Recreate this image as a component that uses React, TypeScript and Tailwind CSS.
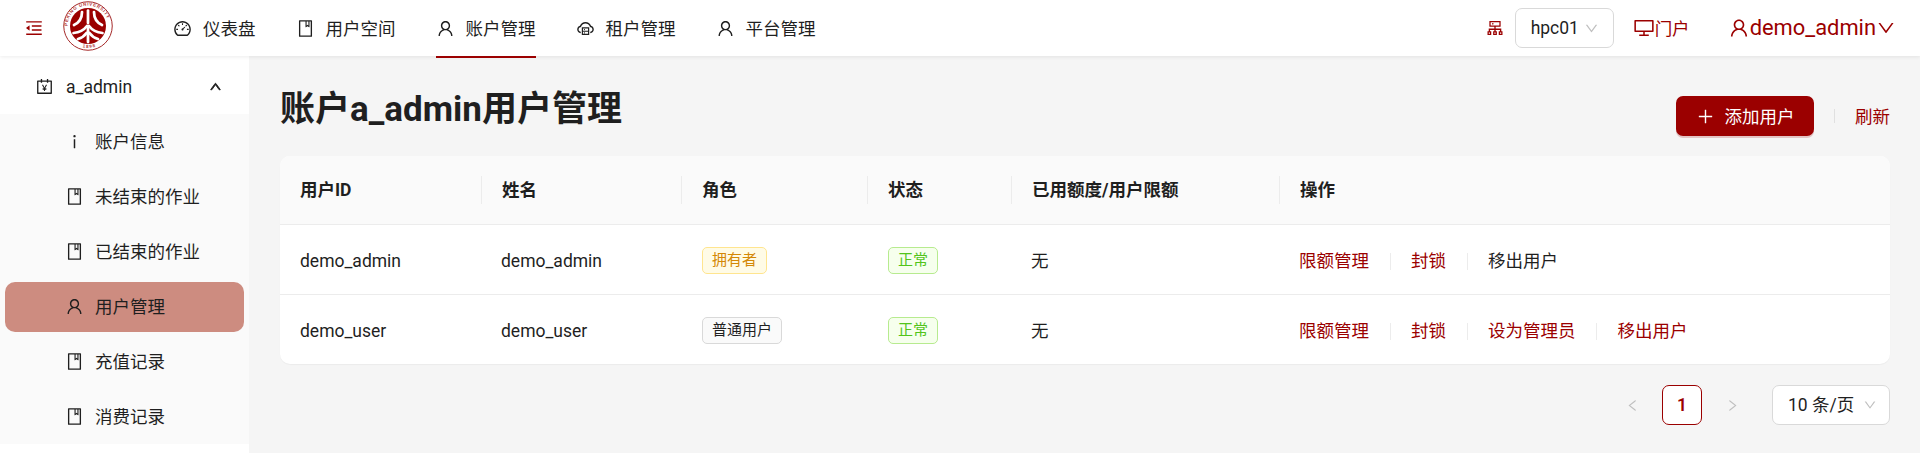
import React from "react";
import {
  AiOutlineAccountBook,
  AiOutlineBook,
  AiOutlineCloudServer,
  AiOutlineCluster,
  AiOutlineDashboard,
  AiOutlineDesktop,
  AiOutlineDown,
  AiOutlineInfo,
  AiOutlineLeft,
  AiOutlineMenuFold,
  AiOutlinePlus,
  AiOutlineRight,
  AiOutlineUp,
  AiOutlineUser,
} from "react-icons/ai";

const navItems = [
  { label: "仪表盘", icon: <AiOutlineDashboard size={19} /> },
  { label: "用户空间", icon: <AiOutlineBook size={19} /> },
  { label: "账户管理", icon: <AiOutlineUser size={19} />, active: true },
  { label: "租户管理", icon: <AiOutlineCloudServer size={19} /> },
  { label: "平台管理", icon: <AiOutlineUser size={19} /> },
];

const sideItems = [
  { label: "账户信息", icon: <AiOutlineInfo size={19} /> },
  { label: "未结束的作业", icon: <AiOutlineBook size={19} /> },
  { label: "已结束的作业", icon: <AiOutlineBook size={19} /> },
  { label: "用户管理", icon: <AiOutlineUser size={19} />, active: true },
  { label: "充值记录", icon: <AiOutlineBook size={19} /> },
  { label: "消费记录", icon: <AiOutlineBook size={19} /> },
];

const columns = [
  { label: "用户ID", width: "w-[201px]" },
  { label: "姓名", width: "w-[200px]" },
  { label: "角色", width: "w-[186px]" },
  { label: "状态", width: "w-[144px]" },
  { label: "已用额度/用户限额", width: "w-[268px]" },
  { label: "操作", width: "" },
];

const users = [
  { id: "demo_admin", owner: true, actions: ["限额管理", "封锁", "移出用户"] },
  { id: "demo_user", owner: false, actions: ["限额管理", "封锁", "设为管理员", "移出用户"] },
];

const Logo = () => (
  <svg viewBox="0 0 100 100" className="w-[50px] h-[50px]">
    <circle cx="50" cy="50" r="48.5" fill="#fff" stroke="#a52a2a" strokeWidth="2" />
    <circle cx="50" cy="50" r="36" fill="#9b0000" />
    <defs>
      <path id="ringTop" d="M 9 50 A 41 41 0 0 1 91 50" />
      <path id="ringBottom" d="M 6 50 A 44 44 0 0 0 94 50" />
    </defs>
    <text fontSize="9" fontWeight="700" fill="#b33a3a" fontFamily="Liberation Sans, sans-serif" letterSpacing="1.4">
      <textPath href="#ringTop">PEKING UNIVERSITY</textPath>
    </text>
    <text fontSize="9" fontWeight="700" fill="#b33a3a" fontFamily="Liberation Sans, sans-serif" letterSpacing="2">
      <textPath href="#ringBottom" startOffset="42%">1898</textPath>
    </text>
    <g fill="none" stroke="#fff" strokeWidth="5.5" strokeLinecap="round">
      <path d="M50 19 V44" />
      <path d="M38 22 C38 34 33 43 22 48" />
      <path d="M62 22 C62 34 67 43 78 48" />
      <path d="M50 50 V82" />
      <path d="M48 50 C42 58 32 63 21 64" />
      <path d="M52 50 C58 58 68 63 79 64" />
      <path d="M47 64 C43 70 37 74 30 76" />
      <path d="M53 64 C57 70 63 74 70 76" />
    </g>
  </svg>
);

const Tag = ({ tone, children }: { tone: "gold" | "green" | "gray"; children: React.ReactNode }) => {
  const tones = {
    gold: "bg-[#fffbe6] border-[#ffe58f] text-[#d48806]",
    green: "bg-[#f6ffed] border-[#b7eb8f] text-[#52c41a]",
    gray: "bg-[#fafafa] border-[#d9d9d9] text-[#1f1f1f]",
  };
  return (
    <span className={`ml-px inline-flex items-center h-[27px] px-[9px] rounded-[5px] border text-[15px] ${tones[tone]}`}>
      {children}
    </span>
  );
};

export default function App() {
  return (
    <div className="w-[1920px] h-[453px] overflow-hidden flex flex-col bg-[#f5f5f5] text-[17.5px] text-[#1f1f1f] font-['Roboto','Noto_Sans_CJK_SC',sans-serif]">
      <header className="relative z-10 h-14 shrink-0 bg-white flex items-center shadow-[0_1px_4px_rgba(0,0,0,0.08)]">
        <div className="w-[63px] pl-[24px] text-[#9b0000]">
          <AiOutlineMenuFold size={20} />
        </div>
        <div className="w-[90px] mb-[4px]">
          <Logo />
        </div>
        <nav className="flex h-full">
          {navItems.map((item) => (
            <div key={item.label} className="relative flex items-center px-5">
              <span className="w-[30px]">{item.icon}</span>
              <span className="pt-[2px]">{item.label}</span>
              {item.active && <span className="absolute left-5 right-0 mr-5 top-14 h-[2px] bg-[#9b0000]" />}
            </div>
          ))}
        </nav>
        <div className="ml-auto flex items-center text-[#9b0000]">
          <AiOutlineCluster size={20} />
          <div className="ml-[10px] w-[99px] h-10 pl-[15px] pr-[14px] flex items-center justify-between rounded-[7px] border border-[#d9d9d9] text-[#1f1f1f]">
            hpc01
            <AiOutlineDown size={15} className="text-[#bfbfbf]" />
          </div>
          <div className="ml-[19px] flex items-center">
            <AiOutlineDesktop size={22} />
            <span className="pt-[2px]">门户</span>
          </div>
          <div className="ml-[38px] mr-[24px] flex items-center text-[21.9px]">
            <AiOutlineUser size={22} />
            demo_admin
            <AiOutlineDown size={20} />
          </div>
        </div>
      </header>

      <div className="flex flex-1 min-h-0">
        <aside className="w-[249px] shrink-0 bg-white">
          <div className="h-[58px] pt-[2px] pl-[35px] pr-[27px] flex items-center">
            <AiOutlineAccountBook size={19} />
            <span className="ml-[12px] pt-[2px] flex-1">a_admin</span>
            <AiOutlineUp size={13} stroke="currentColor" strokeWidth={70} />
          </div>
          <div className="bg-[#fafafa] flex flex-col gap-[5px] py-[2.5px]">
            {sideItems.map((item) => (
              <div
                key={item.label}
                className={`h-[50px] mx-[5px] pl-[60px] flex items-center rounded-[10px] ${item.active ? "bg-[#cd8c80]" : ""}`}
              >
                <span className="w-[30px]">{item.icon}</span>
                <span className="pt-[2px]">{item.label}</span>
              </div>
            ))}
          </div>
        </aside>

        <main className="flex-1 min-w-0 pl-[31px] pr-[30px] pt-10">
          <div className="h-[60px] flex items-start justify-between">
            <h1 className="text-[35px] leading-[28px] font-bold">账户a_admin用户管理</h1>
            <div className="flex items-center">
              <button className="w-[138px] h-10 flex items-center justify-center gap-[10px] rounded-[7px] bg-[#9b0000] text-white shadow-[0_2px_0_rgba(155,0,0,0.2)]">
                <AiOutlinePlus size={19} />
                <span className="pt-[2px]">添加用户</span>
              </button>
              <span className="w-px h-[14px] mx-5 bg-[#e0e0e0]" />
              <span className="pt-[2px] text-[#9b0000]">刷新</span>
            </div>
          </div>

          <table className="w-full table-fixed bg-white rounded-[10px] shadow-[0_1px_1px_rgba(0,0,0,0.04)] overflow-hidden">
            <thead>
              <tr className="h-[68px] bg-[#fafafa] border-b border-[#ececec]">
                {columns.map((col, i) => (
                  <th key={col.label} className={`p-0 text-left font-bold ${col.width}`}>
                    <div className="flex items-center">
                      {i > 0 && <span className="w-px h-7 bg-[#ececec]" />}
                      <span className="pl-5">{col.label}</span>
                    </div>
                  </th>
                ))}
              </tr>
            </thead>
            <tbody>
              {users.map((user, r) => (
                <tr key={user.id} className={`h-[70px] ${r === 0 ? "border-b border-[#ececec]" : ""}`}>
                  <td className="pl-5 pt-1">{user.id}</td>
                  <td className="pl-5 pt-1">{user.id}</td>
                  <td className="pl-5 pt-[2px]">
                    {user.owner ? <Tag tone="gold">拥有者</Tag> : <Tag tone="gray">普通用户</Tag>}
                  </td>
                  <td className="pl-5 pt-[2px]">
                    <Tag tone="green">正常</Tag>
                  </td>
                  <td className="pl-5 pt-1">无</td>
                  <td className="pl-5 pt-1">
                    <div className="flex items-center">
                      {user.actions.map((action, i) => {
                        const plain = user.owner && action === "移出用户";
                        return (
                          <React.Fragment key={action}>
                            {i > 0 && <span className="w-px h-[17px] mx-[20.5px] bg-[#ececec]" />}
                            <span className={plain ? "" : "text-[#9b0000]"}>{action}</span>
                          </React.Fragment>
                        );
                      })}
                    </div>
                  </td>
                </tr>
              ))}
            </tbody>
          </table>

          <div className="mt-[21px] flex items-center justify-end gap-[10px]">
            <span className="w-10 h-10 flex items-center justify-center text-[#bfbfbf]">
              <AiOutlineLeft size={15} />
            </span>
            <span className="w-10 h-10 flex items-center justify-center rounded-[7px] border border-[#9b0000] bg-white text-[#9b0000] font-semibold">
              1
            </span>
            <span className="w-10 h-10 flex items-center justify-center text-[#bfbfbf]">
              <AiOutlineRight size={15} />
            </span>
            <div className="ml-[10px] w-[118px] h-10 pl-[15px] pr-[12px] flex items-center justify-between rounded-[7px] border border-[#d9d9d9] bg-white">
              10 条/页
              <AiOutlineDown size={14} className="text-[#bfbfbf]" />
            </div>
          </div>
        </main>
      </div>
    </div>
  );
}
